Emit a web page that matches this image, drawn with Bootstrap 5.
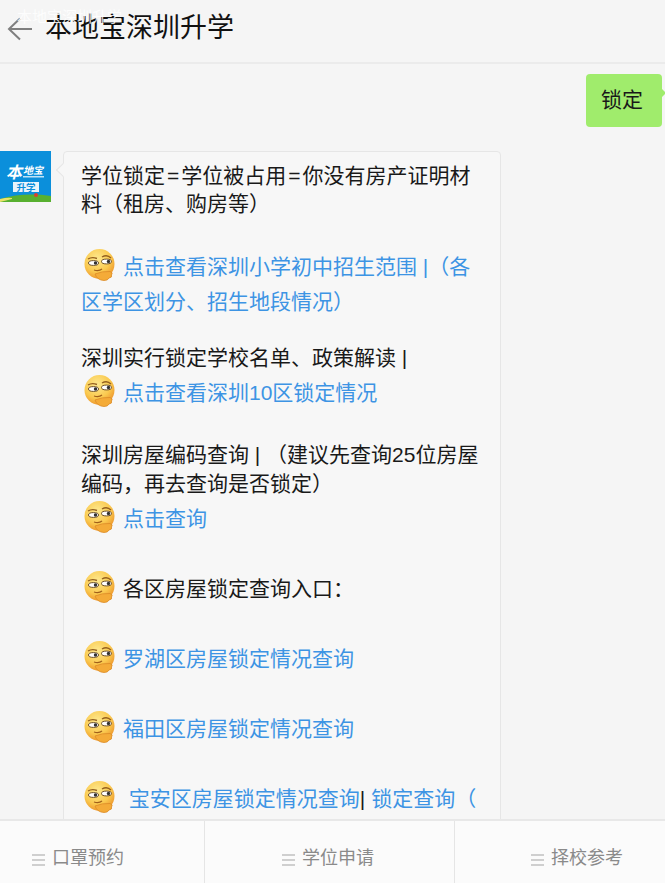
<!doctype html>
<html lang="zh"><head><meta charset="utf-8">
<link href="https://cdn.jsdelivr.net/npm/bootstrap@5.3.0/dist/css/bootstrap.min.css" rel="stylesheet">
<style>
html,body{height:883px;overflow:hidden}
body{background:#f5f5f5;font-family:"Liberation Sans","Noto Sans CJK SC",sans-serif;color:#191919}
.shell{height:883px}
.topbar{height:64px;flex:none;border-bottom:2px solid #ebebeb;padding:0 0 5px 7px;gap:12px}
.topbar h1{font-size:27px;font-weight:400;margin:0;color:#111}
.ghost{position:absolute;left:17px;top:6px;color:#fff;font-size:15px;opacity:.85}
.chat{min-height:0;overflow:hidden}
.outgoing{background:#a0ec6c;border-radius:4px;width:76px;height:53px;margin:10px 3px 0 0;padding:0 4px 1px 0;font-size:21px;position:relative}
.outgoing:after{content:"";position:absolute;right:-4px;top:15px;border:4px solid transparent;border-left-color:#a0ec6c;border-right:0}
.incoming{margin-top:24px;align-items:flex-start}
.avatar{width:51px;height:51px;flex:none;margin-right:12px}
.bubble{position:relative;width:438px;background:#f7f7f7;border:1px solid #e6e6e6;border-radius:4px;padding:10px 17px 40px;font-size:21px;line-height:28px}
.bubble:before{content:"";position:absolute;left:-6px;top:13px;width:10px;height:10px;background:#f7f7f7;border-left:1px solid #e6e6e6;border-bottom:1px solid #e6e6e6;transform:rotate(45deg)}
.bubble p{margin:0}
.eq{padding:0 2px}
.gap1{margin-top:30px!important}
.gap2{margin-top:25px!important}
.gap2b{margin-top:31px!important}
.gap3{margin-top:34px!important}
.gap3a{margin-top:34px!important}
.nudge3{margin-top:2px!important}
.nudge2{margin-top:2px!important}
.lh2{line-height:28.500px}
.emo{width:35px;height:35px;vertical-align:-9px;margin:0 6px 0 1px}
.eline{line-height:35px}
.lnk{color:#3d94e4;text-decoration:none}
.tabbar{height:64px;flex:none;background:#fbfbfb;border-top:2px solid #e8e8e8;position:relative}
.tabitem{color:#8a8a8a;font-size:18px;gap:7px;padding-top:12px;border-right:1px solid #e5e5e5}
.tabitem:last-child{border-right:0}
.t1{width:205px;padding-left:32px}
.t2{width:250px;padding-left:77px}
.t3{flex:1;padding-left:76px}
.bars{width:13px;height:12px;flex:none;margin-top:3px;background:repeating-linear-gradient(#cfcfcf 0 2px,transparent 2px 5px)}
</style></head>
<body>
<svg width="0" height="0" class="d-block position-absolute"><defs>
<radialGradient id="fc" cx=".42" cy=".32" r=".8"><stop offset="0" stop-color="#fde98f"/><stop offset=".55" stop-color="#fac94f"/><stop offset="1" stop-color="#e8821f"/></radialGradient>
<symbol id="thinker" viewBox="0 0 35 35">
<circle cx="17.500" cy="16" r="15" fill="url(#fc)"/>
<path d="M6 11q4-2.500 9-.5M20 9q5-3 9 1" fill="none" stroke="#94601f" stroke-width="1.400"/>
<ellipse cx="11.500" cy="15" rx="5" ry="2.400" fill="#fff" stroke="#5d3f1a" stroke-width=".9"/>
<ellipse cx="24.500" cy="13.500" rx="5" ry="2.400" fill="#fff" stroke="#5d3f1a" stroke-width=".9"/>
<circle cx="13.500" cy="15" r="1.700" fill="#333"/><circle cx="26.500" cy="13.500" r="1.700" fill="#333"/>
<path d="M12 22q5 1.500 8-1" fill="none" stroke="#a0601c" stroke-width="1.200"/>
<path d="M13 26q7-3 15-2.500q3.500 1 1.500 3.500q1 2.500-2.500 3q-1 2.500-5 2.500q-7-.5-9-6.500z" fill="#f4ab38" stroke="#dc8a26" stroke-width=".8"/>
</symbol></defs></svg>
<div class="shell d-flex flex-column position-relative">
<div class="topbar d-flex align-items-center">
<svg width="26" height="26" viewBox="0 0 26 26"><path d="M25 13H2M13 2.500 2 13l11 10.500" fill="none" stroke="#7f7f7f" stroke-width="2"/></svg>
<h1>本地宝深圳升学</h1>
</div>
<div class="ghost">本地宝深圳升学</div>
<div class="chat flex-grow-1">
<div class="d-flex justify-content-end">
<div class="outgoing d-flex align-items-center justify-content-center">锁定</div>
</div>
<div class="incoming d-flex">
<svg class="avatar" viewBox="0 0 51 51">
<rect width="51" height="51" fill="#0b8fdb"/>
<path d="M0 48q24-7 51-3v6H0z" fill="#58b030"/>
<path d="M0 48q8-2 12-1v1l-12 3z" fill="#e9e26a"/>
<circle cx="36" cy="44" r="2" fill="#d8402f"/>
<text x="6" y="27" font-size="16" font-weight="700" font-style="italic" fill="#fff" font-family="Noto Sans CJK SC,sans-serif">本</text>
<text x="23" y="23" font-size="10" font-weight="700" font-style="italic" fill="#fff" font-family="Noto Sans CJK SC,sans-serif">地宝</text>
<rect x="23" y="25" width="21" height="1.500" fill="#bfe3f7"/>
<rect x="13" y="31" width="26" height="10" fill="#e9f4fb"/>
<text x="26" y="39.500" font-size="9.500" font-weight="700" fill="#0b8fdb" text-anchor="middle" font-family="Noto Sans CJK SC,sans-serif">升学</text>
</svg>
<div class="bubble">
<p>学位锁定<span class="eq">=</span>学位被占用<span class="eq">=</span>你没有房产证明材<br>料（租房、购房等）</p>
<p class="eline gap1"><svg class="emo"><use href="#thinker"/></svg><a class="lnk" href="#">点击查看深圳小学初中招生范围 |（各<br>区学区划分、招生地段情况）</a></p>
<p class="gap2">深圳实行锁定学校名单、政策解读 |</p>
<p class="eline nudge3"><svg class="emo"><use href="#thinker"/></svg><a class="lnk" href="#">点击查看深圳10区锁定情况</a></p>
<p class="gap2b lh2">深圳房屋编码查询 | （建议先查询25位房屋<br>编码，再去查询是否锁定）</p>
<p class="eline nudge2"><svg class="emo"><use href="#thinker"/></svg><a class="lnk" href="#">点击查询</a></p>
<p class="eline gap3a"><svg class="emo"><use href="#thinker"/></svg>各区房屋锁定查询入口：</p>
<p class="eline gap3"><svg class="emo"><use href="#thinker"/></svg><a class="lnk" href="#">罗湖区房屋锁定情况查询</a></p>
<p class="eline gap3"><svg class="emo"><use href="#thinker"/></svg><a class="lnk" href="#">福田区房屋锁定情况查询</a></p>
<p class="eline gap3"><svg class="emo"><use href="#thinker"/></svg> <a class="lnk" href="#">宝安区房屋锁定情况查询</a>| <a class="lnk" href="#">锁定查询（</a></p>
</div>
</div>
</div>
<div class="tabbar d-flex">
<div class="tabitem t1 d-flex align-items-center"><span class="bars"></span>口罩预约</div>
<div class="tabitem t2 d-flex align-items-center"><span class="bars"></span>学位申请</div>
<div class="tabitem t3 d-flex align-items-center"><span class="bars"></span>择校参考</div>
</div>
</div>
</body></html>
